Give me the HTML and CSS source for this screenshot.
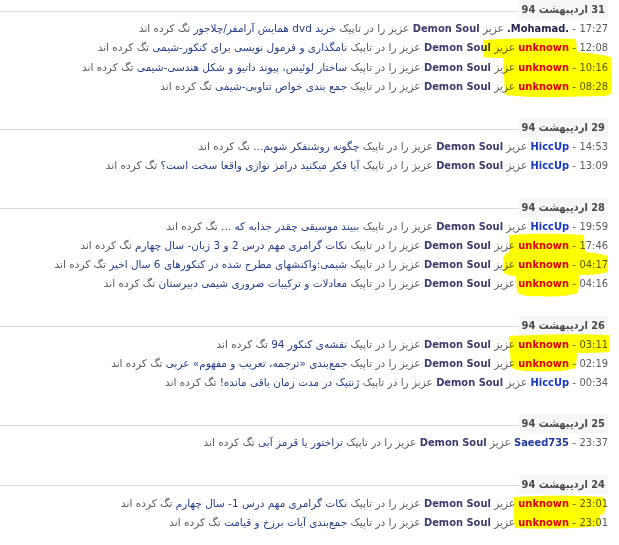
FILE: index.html
```html
<!DOCTYPE html>
<html lang="fa" dir="rtl">
<head>
<meta charset="utf-8">
<title>تگ‌ها</title>
<link rel="stylesheet" href="styles.css">
</head>
<body>
<div class="page">
  <section class="day">
    <div class="day-head"><span class="day-date">31 اردیبهشت 94</span><span class="day-line"></span></div>
    <ul class="events">
      <li><span class="time">17:27</span> - <a class="user u-dark">.Mohamad.</a> عزیز <a class="user u-demon">Demon Soul</a> عزیز را در تاپیک <a class="topic">خرید dvd همایش آرامفر/چلاجور</a> تگ کرده اند</li>
      <li><span class="time">12:08</span> - <a class="user u-red">unknown</a> عزیز <a class="user u-demon">Demon Soul</a> عزیز را در تاپیک <a class="topic">نامگذاری و فرمول نویسی برای کنکور-شیمی</a> تگ کرده اند</li>
      <li><span class="time">10:16</span> - <a class="user u-red">unknown</a> عزیز <a class="user u-demon">Demon Soul</a> عزیز را در تاپیک <a class="topic">ساختار لوئیس، پیوند داتیو و شکل هندسی-شیمی</a> تگ کرده اند</li>
      <li><span class="time">08:28</span> - <a class="user u-red">unknown</a> عزیز <a class="user u-demon">Demon Soul</a> عزیز را در تاپیک <a class="topic">جمع بندی خواص تناوبی-شیمی</a> تگ کرده اند</li>
    </ul>
  </section>
  <section class="day">
    <div class="day-head"><span class="day-date">29 اردیبهشت 94</span><span class="day-line"></span></div>
    <ul class="events">
      <li><span class="time">14:53</span> - <a class="user u-blue">HiccUp</a> عزیز <a class="user u-demon">Demon Soul</a> عزیز را در تاپیک <a class="topic">چگونه روشنفکر شویم...</a> تگ کرده اند</li>
      <li><span class="time">13:09</span> - <a class="user u-blue">HiccUp</a> عزیز <a class="user u-demon">Demon Soul</a> عزیز را در تاپیک <a class="topic">آیا فکر میکنید درامز نوازی واقعا سخت است؟</a> تگ کرده اند</li>
    </ul>
  </section>
  <section class="day">
    <div class="day-head"><span class="day-date">28 اردیبهشت 94</span><span class="day-line"></span></div>
    <ul class="events">
      <li><span class="time">19:59</span> - <a class="user u-blue">HiccUp</a> عزیز <a class="user u-demon">Demon Soul</a> عزیز را در تاپیک <a class="topic">ببیند موسیقی چقدر جذابه که ...</a> تگ کرده اند</li>
      <li><span class="time">17:46</span> - <a class="user u-red">unknown</a> عزیز <a class="user u-demon">Demon Soul</a> عزیز را در تاپیک <a class="topic">نکات گرامری مهم درس 2 و 3 زبان- سال چهارم</a> تگ کرده اند</li>
      <li><span class="time">04:17</span> - <a class="user u-red">unknown</a> عزیز <a class="user u-demon">Demon Soul</a> عزیز را در تاپیک <a class="topic">شیمی:واکنشهای مطرح شده در کنکورهای 6 سال اخیر</a> تگ کرده اند</li>
      <li><span class="time">04:16</span> - <a class="user u-red">unknown</a> عزیز <a class="user u-demon">Demon Soul</a> عزیز را در تاپیک <a class="topic">معادلات و ترکیبات ضروری شیمی دبیرستان</a> تگ کرده اند</li>
    </ul>
  </section>
  <section class="day">
    <div class="day-head"><span class="day-date">26 اردیبهشت 94</span><span class="day-line"></span></div>
    <ul class="events">
      <li><span class="time">03:11</span> - <a class="user u-red">unknown</a> عزیز <a class="user u-demon">Demon Soul</a> عزیز را در تاپیک <a class="topic">نقشه‌ی کنکور 94</a> تگ کرده اند</li>
      <li><span class="time">02:19</span> - <a class="user u-red">unknown</a> عزیز <a class="user u-demon">Demon Soul</a> عزیز را در تاپیک <a class="topic">جمع‌بندی «ترجمه، تعریب و مفهوم» عربی</a> تگ کرده اند</li>
      <li><span class="time">00:34</span> - <a class="user u-blue">HiccUp</a> عزیز <a class="user u-demon">Demon Soul</a> عزیز را در تاپیک <a class="topic">ژنتیک در مدت زمان باقی مانده!</a> تگ کرده اند</li>
    </ul>
  </section>
  <section class="day">
    <div class="day-head"><span class="day-date">25 اردیبهشت 94</span><span class="day-line"></span></div>
    <ul class="events">
      <li><span class="time">23:37</span> - <a class="user u-saeed">Saeed735</a> عزیز <a class="user u-demon">Demon Soul</a> عزیز را در تاپیک <a class="topic">تراختور یا قرمز آبی</a> تگ کرده اند</li>
    </ul>
  </section>
  <section class="day">
    <div class="day-head"><span class="day-date">24 اردیبهشت 94</span><span class="day-line"></span></div>
    <ul class="events">
      <li><span class="time">23:01</span> - <a class="user u-red">unknown</a> عزیز <a class="user u-demon">Demon Soul</a> عزیز را در تاپیک <a class="topic">نکات گرامری مهم درس 1- سال چهارم</a> تگ کرده اند</li>
      <li><span class="time">23:01</span> - <a class="user u-red">unknown</a> عزیز <a class="user u-demon">Demon Soul</a> عزیز را در تاپیک <a class="topic">جمع‌بندی آیات برزخ و قیامت</a> تگ کرده اند</li>
    </ul>
  </section>

  <svg class="marker" viewBox="0 0 619 545" width="619" height="545" aria-hidden="true">
    <path d="M483,40 Q530,37 576,39 L577,52 Q595,53 611,57 L612,90 Q611,97 600,96 L560,97 Q530,98 505,95 L503,58 Q490,58 483,57 Z"/>
    <path d="M509,235 Q545,232 584,235 L585,252 Q600,253 608,256 L608,272 Q600,275 580,275 L578,293 Q560,298 540,296 Q520,297 517,292 L516,276 Q508,276 504,273 L503,257 Q506,253 509,252 Z"/>
    <path d="M509,336 Q560,333 609,335 L609,352 Q595,353 577,353 L576,368 Q560,373 530,371 Q512,371 511,366 Z"/>
    <path d="M514,497 Q560,494 604,497 Q606,505 604,514 L600,515 L600,526 Q560,530 515,528 Q512,512 514,497 Z"/>
  </svg>
</div>
</body>
</html>
```

FILE: styles.css
```css
html, body {
  margin: 0;
  padding: 0;
  background: #ffffff;
}

.page {
  position: relative;
  width: 619px;
  min-height: 545px;
  box-sizing: border-box;
  direction: rtl;
  padding: 0 11px 0 0;
  font-family: "DejaVu Sans", sans-serif;
  font-size: 10.5px;
  color: #5a5a5a;
}

.day {
  margin: 0 0 22px 0;
}

.day-head {
  display: flex;
  align-items: center;
  height: 19px;
}

.day-date {
  font-family: "DejaVu Sans Condensed", "DejaVu Sans", sans-serif;
  font-stretch: condensed;
  font-size: 11px;
  font-weight: bold;
  color: #4a4a4a;
  background: #f6f6f6;
  line-height: 19px;
  padding: 0 3px 0 3px;
  white-space: nowrap;
}

.day-line {
  flex: 1;
  border-top: 1px solid #dadada;
  margin-top: 3px;
}

.events {
  list-style: none;
  margin: 0;
  padding: 0;
}

.events li {
  line-height: 19.25px;
  white-space: nowrap;
}

.time,
.user {
  font-family: "DejaVu Sans Condensed", "DejaVu Sans", sans-serif;
  font-stretch: condensed;
  font-size: 11px;
}

.time {
  color: #5a5a5a;
}

.user {
  font-weight: bold;
  text-decoration: none;
}

.u-demon { color: #3b3b6e; }
.u-dark { color: #25254d; }
.u-blue { color: #1638c4; }
.u-saeed { color: #1f3a9e; }
.u-red { color: #e00000; }

.topic {
  color: #263d8a;
  text-decoration: none;
}

.marker {
  position: absolute;
  top: 0;
  left: 0;
  pointer-events: none;
  mix-blend-mode: multiply;
  fill: #ffff00;
}
```
